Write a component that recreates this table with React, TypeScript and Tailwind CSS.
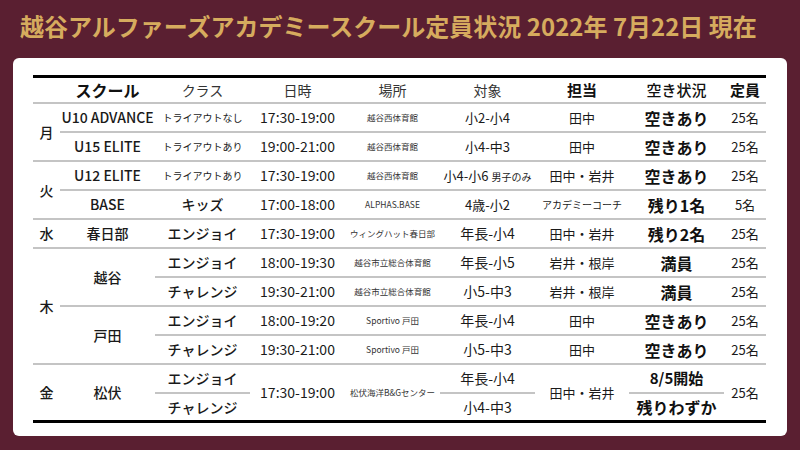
import React from 'react';

const font = { fontFamily: '"Noto Sans CJK JP", "Noto Sans", sans-serif' };

const G = 'border-b-2 border-[#c4c4c4]';
const K = 'border-b-[3px] border-black';

const place = 'text-[8.5px] text-[#333]';
const status = 'text-[16px] font-bold text-[#111]';
const cell = 'text-center align-middle p-0 whitespace-nowrap';

function Pair({ a, b }: { a: string; b: string }) {
  return (
    <span>
      {a}・{b}
    </span>
  );
}

export default function App() {
  return (
    <div className="w-[800px] h-[450px] bg-[#5a1f31] overflow-hidden" style={font}>
      <h1 className="pl-[20px] pt-[10px] text-[24px] leading-[32px] font-bold text-[#d6ab5e]">
        越谷アルファーズアカデミースクール定員状況 2022年 7月22日 現在
      </h1>
      <div className="mt-[16px] ml-[13px] w-[774px] h-[378px] bg-white rounded-[6px] pt-[17px] pl-[20px]">
        <table className="table-fixed w-[733px] border-separate border-spacing-0 text-[#1a1a1a]">
          <colgroup>
            <col className="w-[27px]" />
            <col className="w-[95px]" />
            <col className="w-[95px]" />
            <col className="w-[95px]" />
            <col className="w-[95px]" />
            <col className="w-[95px]" />
            <col className="w-[94px]" />
            <col className="w-[95px]" />
            <col className="w-[42px]" />
          </colgroup>
          <thead>
            <tr className="h-[28px]">
              {[
                ['', 'font-bold'],
                ['スクール', 'text-[16px] font-bold text-[#111]'],
                ['クラス', 'text-[14px] font-normal text-[#333]'],
                ['日時', 'text-[14px] font-normal text-[#333]'],
                ['場所', 'text-[14px] font-normal text-[#333]'],
                ['対象', 'text-[14px] font-normal text-[#333]'],
                ['担当', 'text-[15px] font-bold text-[#111]'],
                ['空き状況', 'text-[15px] font-medium text-[#111]'],
                ['定員', 'text-[15px] font-bold text-[#111]'],
              ].map(([t, c], i) => (
                <th key={i} className={`${cell} ${c} border-t-[3px] border-t-black ${G}`}>
                  {t}
                </th>
              ))}
            </tr>
          </thead>
          <tbody className="text-[14px]">
            <tr className="h-[29px]">
              <td rowSpan={2} className={`${cell} ${G} text-[14px] font-medium`}>月</td>
              <td className={`${cell} ${G} font-medium`}>U10 ADVANCE</td>
              <td className={`${cell} ${G} text-[10px]`}>トライアウトなし</td>
              <td className={`${cell} ${G}`}>17:30-19:00</td>
              <td className={`${cell} ${G} ${place}`}>越谷西体育館</td>
              <td className={`${cell} ${G} text-[13px]`}>小2-小4</td>
              <td className={`${cell} ${G} text-[13px]`}>田中</td>
              <td className={`${cell} ${G} ${status}`}>空きあり</td>
              <td className={`${cell} ${G} text-[13px]`}>25名</td>
            </tr>
            <tr className="h-[29px]">
              <td className={`${cell} ${G} font-medium`}>U15 ELITE</td>
              <td className={`${cell} ${G} text-[10px]`}>トライアウトあり</td>
              <td className={`${cell} ${G}`}>19:00-21:00</td>
              <td className={`${cell} ${G} ${place}`}>越谷西体育館</td>
              <td className={`${cell} ${G} text-[13px]`}>小4-中3</td>
              <td className={`${cell} ${G} text-[13px]`}>田中</td>
              <td className={`${cell} ${G} ${status}`}>空きあり</td>
              <td className={`${cell} ${G} text-[13px]`}>25名</td>
            </tr>
            <tr className="h-[29px]">
              <td rowSpan={2} className={`${cell} ${G} text-[14px] font-medium`}>火</td>
              <td className={`${cell} ${G} font-medium`}>U12 ELITE</td>
              <td className={`${cell} ${G} text-[10px]`}>トライアウトあり</td>
              <td className={`${cell} ${G}`}>17:30-19:00</td>
              <td className={`${cell} ${G} ${place}`}>越谷西体育館</td>
              <td className={`${cell} ${G} text-[13px]`}>
                小4-小6<span className="text-[10px] ml-[3px]">男子のみ</span>
              </td>
              <td className={`${cell} ${G} text-[13px]`}>
                <Pair a="田中" b="岩井" />
              </td>
              <td className={`${cell} ${G} ${status}`}>空きあり</td>
              <td className={`${cell} ${G} text-[13px]`}>25名</td>
            </tr>
            <tr className="h-[29px]">
              <td className={`${cell} ${G} font-medium`}>BASE</td>
              <td className={`${cell} ${G} font-medium`}>キッズ</td>
              <td className={`${cell} ${G}`}>17:00-18:00</td>
              <td className={`${cell} ${G} ${place}`}>ALPHAS.BASE</td>
              <td className={`${cell} ${G} text-[13px]`}>4歳-小2</td>
              <td className={`${cell} ${G} text-[10px]`}>アカデミーコーチ</td>
              <td className={`${cell} ${G} ${status}`}>残り1名</td>
              <td className={`${cell} ${G} text-[13px]`}>5名</td>
            </tr>
            <tr className="h-[29px]">
              <td className={`${cell} ${G} text-[14px] font-medium`}>水</td>
              <td className={`${cell} ${G} font-medium`}>春日部</td>
              <td className={`${cell} ${G} font-medium`}>エンジョイ</td>
              <td className={`${cell} ${G}`}>17:30-19:00</td>
              <td className={`${cell} ${G} ${place}`}>ウィングハット春日部</td>
              <td className={`${cell} ${G} text-[14px]`}>年長-小4</td>
              <td className={`${cell} ${G} text-[13px]`}>
                <Pair a="田中" b="岩井" />
              </td>
              <td className={`${cell} ${G} ${status}`}>残り2名</td>
              <td className={`${cell} ${G} text-[13px]`}>25名</td>
            </tr>
            <tr className="h-[29px]">
              <td rowSpan={4} className={`${cell} ${G} text-[14px] font-medium`}>木</td>
              <td rowSpan={2} className={`${cell} ${G} font-medium`}>越谷</td>
              <td className={`${cell} ${G} font-medium`}>エンジョイ</td>
              <td className={`${cell} ${G}`}>18:00-19:30</td>
              <td className={`${cell} ${G} ${place}`}>越谷市立総合体育館</td>
              <td className={`${cell} ${G} text-[14px]`}>年長-小5</td>
              <td className={`${cell} ${G} text-[13px]`}>
                <Pair a="岩井" b="根岸" />
              </td>
              <td className={`${cell} ${G} ${status}`}>満員</td>
              <td className={`${cell} ${G} text-[13px]`}>25名</td>
            </tr>
            <tr className="h-[29px]">
              <td className={`${cell} ${G} font-medium`}>チャレンジ</td>
              <td className={`${cell} ${G}`}>19:30-21:00</td>
              <td className={`${cell} ${G} ${place}`}>越谷市立総合体育館</td>
              <td className={`${cell} ${G} text-[14px]`}>小5-中3</td>
              <td className={`${cell} ${G} text-[13px]`}>
                <Pair a="岩井" b="根岸" />
              </td>
              <td className={`${cell} ${G} ${status}`}>満員</td>
              <td className={`${cell} ${G} text-[13px]`}>25名</td>
            </tr>
            <tr className="h-[29px]">
              <td rowSpan={2} className={`${cell} ${G} font-medium`}>戸田</td>
              <td className={`${cell} ${G} font-medium`}>エンジョイ</td>
              <td className={`${cell} ${G}`}>18:00-19:20</td>
              <td className={`${cell} ${G} ${place}`}>Sportivo 戸田</td>
              <td className={`${cell} ${G} text-[14px]`}>年長-小4</td>
              <td className={`${cell} ${G} text-[13px]`}>田中</td>
              <td className={`${cell} ${G} ${status}`}>空きあり</td>
              <td className={`${cell} ${G} text-[13px]`}>25名</td>
            </tr>
            <tr className="h-[29px]">
              <td className={`${cell} ${G} font-medium`}>チャレンジ</td>
              <td className={`${cell} ${G}`}>19:30-21:00</td>
              <td className={`${cell} ${G} ${place}`}>Sportivo 戸田</td>
              <td className={`${cell} ${G} text-[14px]`}>小5-中3</td>
              <td className={`${cell} ${G} text-[13px]`}>田中</td>
              <td className={`${cell} ${G} ${status}`}>空きあり</td>
              <td className={`${cell} ${G} text-[13px]`}>25名</td>
            </tr>
            <tr className="h-[29px]">
              <td rowSpan={2} className={`${cell} ${K} text-[14px] font-medium`}>金</td>
              <td rowSpan={2} className={`${cell} ${K} font-medium`}>松伏</td>
              <td className={`${cell} ${G} font-medium`}>エンジョイ</td>
              <td rowSpan={2} className={`${cell} ${K}`}>17:30-19:00</td>
              <td rowSpan={2} className={`${cell} ${K} ${place}`}>松伏海洋B&amp;Gセンター</td>
              <td className={`${cell} ${G} text-[14px]`}>年長-小4</td>
              <td rowSpan={2} className={`${cell} ${K} text-[13px]`}>
                <Pair a="田中" b="岩井" />
              </td>
              <td className={`${cell} ${G} text-[15px] font-bold text-[#111]`}>8/5開始</td>
              <td rowSpan={2} className={`${cell} ${K} text-[13px]`}>25名</td>
            </tr>
            <tr className="h-[29px]">
              <td className={`${cell} ${K} font-medium`}>チャレンジ</td>
              <td className={`${cell} ${K} text-[14px]`}>小4-中3</td>
              <td className={`${cell} ${K} ${status}`}>残りわずか</td>
            </tr>
          </tbody>
        </table>
      </div>
    </div>
  );
}
